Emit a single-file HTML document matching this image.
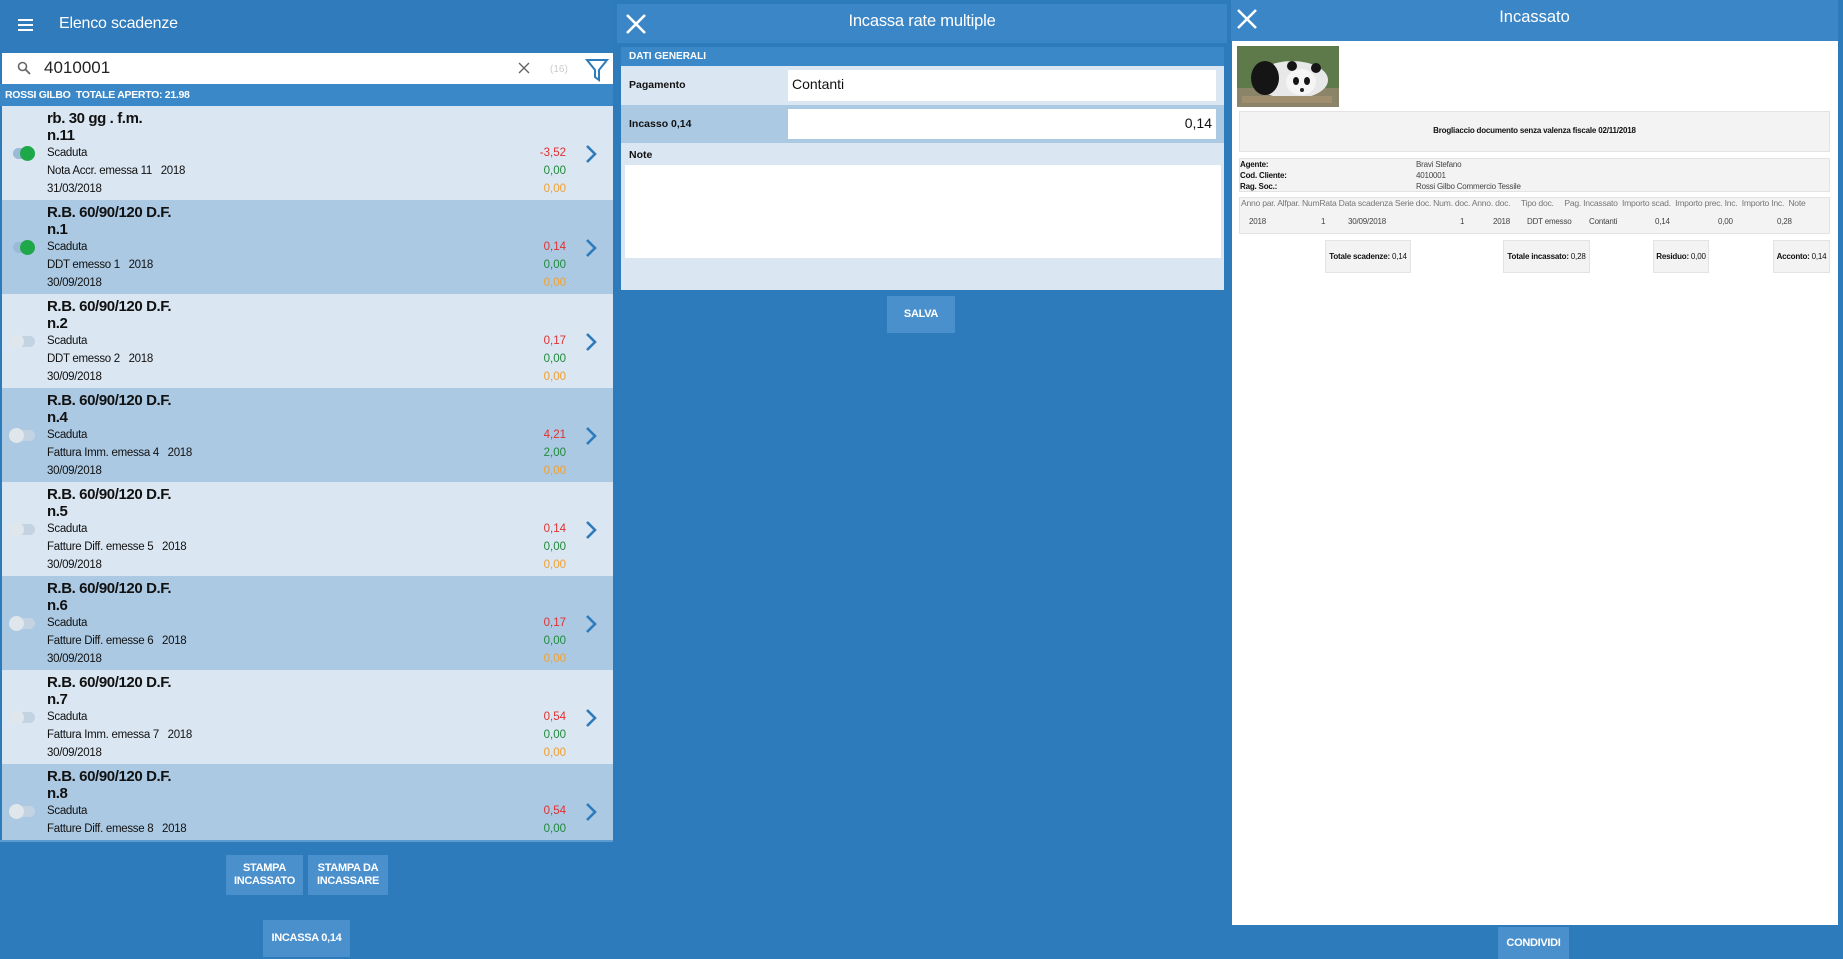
<!DOCTYPE html>
<html><head><meta charset="utf-8"><style>
*{margin:0;padding:0;box-sizing:border-box}
body{width:1843px;height:959px;background:#2e7bbb;font-family:"Liberation Sans",sans-serif;position:relative;overflow:hidden;color:#111}
.a{position:absolute}
.hdr{background:#3a86c6}
.it{position:absolute;left:2px;width:611px;height:94px}
.it .t{position:absolute;left:45px;font-weight:bold;font-size:15px;letter-spacing:-0.4px}
.it .s{position:absolute;left:45px;font-size:11.5px;letter-spacing:-0.3px}
.it .v{position:absolute;right:47px;font-size:11.5px;text-align:right}
.btn{position:absolute;background:#4a90cd;color:#fff;font-weight:bold;font-size:11px;display:flex;align-items:center;justify-content:center;text-align:center;line-height:13px;letter-spacing:-0.3px}
.sm{font-size:8px;letter-spacing:-0.2px;position:absolute}
.box{position:absolute;background:#f3f3f3;border:1px solid #e3e3e3}
</style></head><body>
<!-- LEFT -->
<div class="a" style="left:0;top:0;width:613px;height:53px;background:#2f7bbc"></div>
<div class="a" style="left:18px;top:19px;width:15px;height:2px;background:#fff;box-shadow:0 5px 0 #fff,0 10px 0 #fff"></div>
<div class="a" style="left:59px;top:15px;color:#fff;font-size:16px;letter-spacing:-0.2px">Elenco scadenze</div>
<div class="a" style="left:2px;top:53px;width:611px;height:31px;background:#fff"></div>
<svg class="a" style="left:17px;top:61px" width="14" height="14" viewBox="0 0 14 14"><circle cx="5.5" cy="5.5" r="4" fill="none" stroke="#666" stroke-width="1.6"/><path d="M8.5 8.5L13 13" stroke="#666" stroke-width="1.8"/></svg>
<div class="a" style="left:44px;top:58px;font-size:17px;color:#222">4010001</div>
<svg class="a" style="left:518px;top:62px" width="12" height="12"><path d="M1 1L11 11M11 1L1 11" stroke="#666" stroke-width="1.4"/></svg>
<div class="a" style="left:550px;top:64px;font-size:10px;color:#ccc">(16)</div>
<svg class="a" style="left:585px;top:58px" width="24" height="24" viewBox="0 0 24 24"><path d="M2 2H22L14 12V22L10 19V12Z" fill="none" stroke="#2e7bbb" stroke-width="2"/></svg>
<div class="a" style="left:0;top:84px;width:613px;height:22px;background:#3b88c8"></div>
<div class="a" style="left:5px;top:89px;color:#fff;font-size:10.5px;font-weight:bold;letter-spacing:-0.3px">ROSSI GILBO&nbsp; TOTALE APERTO: 21.98</div>

<div class="a" style="left:2px;top:106px;width:611px;height:734px;overflow:hidden">
<div id="list"></div>
</div>
<div class="a" style="left:0;top:840px;width:613px;height:2px;background:#5c9bd0"></div>

<div class="btn" style="left:226px;top:855px;width:77px;height:40px">STAMPA<br>INCASSATO</div>
<div class="btn" style="left:308px;top:855px;width:80px;height:40px">STAMPA DA<br>INCASSARE</div>
<div class="btn" style="left:263px;top:920px;width:87px;height:37px">INCASSA 0,14</div>

<!-- MIDDLE -->
<div class="a hdr" style="left:617px;top:4px;width:610px;height:39px"></div>
<svg class="a" style="left:625px;top:13px" width="22" height="22"><path d="M2 2L20 20M20 2L2 20" stroke="#fff" stroke-width="2.6"/></svg>
<div class="a" style="left:617px;top:12px;width:610px;text-align:center;color:#fff;font-size:16.5px;letter-spacing:-0.2px">Incassa rate multiple</div>
<div class="a" style="left:621px;top:47px;width:603px;height:243px;background:#dae6f2"></div>
<div class="a" style="left:621px;top:47px;width:603px;height:19px;background:#3b88c8;color:#fff;font-size:10px;font-weight:bold;padding:4px 0 0 8px">DATI GENERALI</div>
<div class="a" style="left:629px;top:79px;font-size:10.5px;font-weight:bold">Pagamento</div>
<div class="a" style="left:788px;top:70px;width:428px;height:31px;background:#fff;font-size:14px;padding:6px 4px">Contanti</div>
<div class="a" style="left:621px;top:105px;width:603px;height:38px;background:#abc9e3"></div>
<div class="a" style="left:629px;top:118px;font-size:10.5px;font-weight:bold">Incasso 0,14</div>
<div class="a" style="left:788px;top:109px;width:428px;height:30px;background:#fff;font-size:14px;padding:6px 4px;text-align:right">0,14</div>
<div class="a" style="left:629px;top:149px;font-size:10.5px;font-weight:bold">Note</div>
<div class="a" style="left:625px;top:165px;width:596px;height:93px;background:#fff"></div>
<div class="btn" style="left:887px;top:296px;width:68px;height:37px;font-size:11px">SALVA</div>

<!-- RIGHT -->
<div class="a hdr" style="left:1231px;top:0;width:607px;height:41px"></div>
<svg class="a" style="left:1236px;top:8px" width="22" height="22"><path d="M2 2L20 20M20 2L2 20" stroke="#fff" stroke-width="2.6"/></svg>
<div class="a" style="left:1231px;top:8px;width:607px;text-align:center;color:#fff;font-size:16.5px">Incassato</div>
<div class="a" style="left:1232px;top:41px;width:606px;height:884px;background:#fff"></div>
<svg class="a" style="left:1237px;top:46px" width="102" height="61" viewBox="0 0 102 61"><rect width="102" height="61" fill="#5f7a4a"/><rect y="42" width="102" height="19" fill="#8c8468"/><ellipse cx="55" cy="34" rx="36" ry="19" fill="#e8e8e8"/><ellipse cx="28" cy="32" rx="14" ry="17" fill="#151515"/><ellipse cx="64" cy="36" rx="15" ry="13" fill="#f5f5f5"/><circle cx="55" cy="20" r="5" fill="#151515"/><circle cx="79" cy="22" r="5" fill="#151515"/><ellipse cx="59" cy="35" rx="3" ry="4" fill="#151515"/><ellipse cx="70" cy="35" rx="3" ry="4" fill="#151515"/><circle cx="65" cy="44" r="2" fill="#222"/><rect x="5" y="50" width="90" height="7" fill="#a08f6e"/></svg>
<div class="box" style="left:1239px;top:111px;width:591px;height:41px"></div>
<div class="sm" style="left:1239px;top:126px;width:591px;text-align:center;font-weight:bold">Brogliaccio documento senza valenza fiscale 02/11/2018</div>
<div class="box" style="left:1239px;top:158px;width:591px;height:34px"></div>
<div class="sm" style="left:1240px;top:159px;font-weight:bold;line-height:11px">Agente:<br>Cod. Cliente:<br>Rag. Soc.:</div>
<div class="sm" style="left:1416px;top:159px;line-height:11px;color:#444">Bravi Stefano<br>4010001<br>Rossi Gilbo Commercio Tessile</div>
<div class="box" style="left:1239px;top:197px;width:591px;height:37px"></div>
<div class="sm" style="left:1241px;top:198px;color:#777;white-space:pre;font-size:8.6px;letter-spacing:-0.25px">Anno par. Alfpar. NumRata Data scadenza Serie doc. Num. doc. Anno. doc.     Tipo doc.     Pag. Incassato  Importo scad.  Importo prec. Inc.  Importo Inc.  Note</div>
<div class="sm" style="left:1249px;top:217px;color:#444">2018</div>
<div class="sm" style="left:1321px;top:217px;color:#444">1</div>
<div class="sm" style="left:1348px;top:217px;color:#444">30/09/2018</div>
<div class="sm" style="left:1460px;top:217px;color:#444">1</div>
<div class="sm" style="left:1493px;top:217px;color:#444">2018</div>
<div class="sm" style="left:1527px;top:217px;color:#444">DDT emesso</div>
<div class="sm" style="left:1589px;top:217px;color:#444">Contanti</div>
<div class="sm" style="left:1655px;top:217px;color:#444">0,14</div>
<div class="sm" style="left:1718px;top:217px;color:#444">0,00</div>
<div class="sm" style="left:1777px;top:217px;color:#444">0,28</div>
<div class="box" style="left:1325px;top:240px;width:86px;height:33px"></div>
<div class="sm" style="left:1325px;top:252px;width:86px;text-align:center"><b>Totale scadenze:</b> 0,14</div>
<div class="box" style="left:1503px;top:240px;width:87px;height:33px"></div>
<div class="sm" style="left:1503px;top:252px;width:87px;text-align:center"><b>Totale incassato:</b> 0,28</div>
<div class="box" style="left:1653px;top:240px;width:56px;height:33px"></div>
<div class="sm" style="left:1653px;top:252px;width:56px;text-align:center"><b>Residuo:</b> 0,00</div>
<div class="box" style="left:1773px;top:240px;width:57px;height:33px"></div>
<div class="sm" style="left:1773px;top:252px;width:57px;text-align:center"><b>Acconto:</b> 0,14</div>
<div class="btn" style="left:1498px;top:927px;width:71px;height:32px">CONDIVIDI</div>

<script>
var d=[["rb. 30 gg . f.m.","n.11","Nota Accr. emessa 11","31/03/2018","-3,52","0,00",1],
["R.B. 60/90/120 D.F.","n.1","DDT emesso 1","30/09/2018","0,14","0,00",1],
["R.B. 60/90/120 D.F.","n.2","DDT emesso 2","30/09/2018","0,17","0,00",0],
["R.B. 60/90/120 D.F.","n.4","Fattura Imm. emessa 4","30/09/2018","4,21","2,00",0],
["R.B. 60/90/120 D.F.","n.5","Fatture Diff. emesse 5","30/09/2018","0,14","0,00",0],
["R.B. 60/90/120 D.F.","n.6","Fatture Diff. emesse 6","30/09/2018","0,17","0,00",0],
["R.B. 60/90/120 D.F.","n.7","Fattura Imm. emessa 7","30/09/2018","0,54","0,00",0],
["R.B. 60/90/120 D.F.","n.8","Fatture Diff. emesse 8","","0,54","0,00",0]];
var h="";
d.forEach(function(r,i){
var bg=i%2?"#abc9e3":"#dae6f2";
var tog=r[6]?'<div class="a" style="left:11px;top:42px;width:22px;height:11px;border-radius:6px;background:#9bbad6"></div><div class="a" style="left:18px;top:40px;width:15px;height:15px;border-radius:50%;background:#1fa84a"></div>'
:'<div class="a" style="left:9px;top:42px;width:24px;height:11px;border-radius:6px;background:#c3d3e2"></div><div class="a" style="left:7px;top:40px;width:15px;height:15px;border-radius:50%;background:#dfe6ec"></div>';
h+='<div class="it" style="left:0;top:'+(i*94)+'px;background:'+bg+'">'+tog+
'<div class="t" style="top:4px">'+r[0]+'</div><div class="t" style="top:21px">'+r[1]+'</div>'+
'<div class="s" style="top:41px">Scaduta</div><div class="s" style="top:59px">'+r[2]+'&nbsp;&nbsp; 2018</div><div class="s" style="top:77px">'+r[3]+'</div>'+
'<div class="v" style="top:41px;color:#e03030">'+r[4]+'</div><div class="v" style="top:59px;color:#1f8a3a">'+r[5]+'</div>'+(r[3]?'<div class="v" style="top:77px;color:#f0a030">0,00</div>':'')+
'<svg class="a" style="left:583px;top:38px" width="12" height="20"><path d="M2 2L10 10L2 18" fill="none" stroke="#2e7bbb" stroke-width="2.6"/></svg></div>';
});
document.getElementById("list").innerHTML=h;
</script>
</body></html>
